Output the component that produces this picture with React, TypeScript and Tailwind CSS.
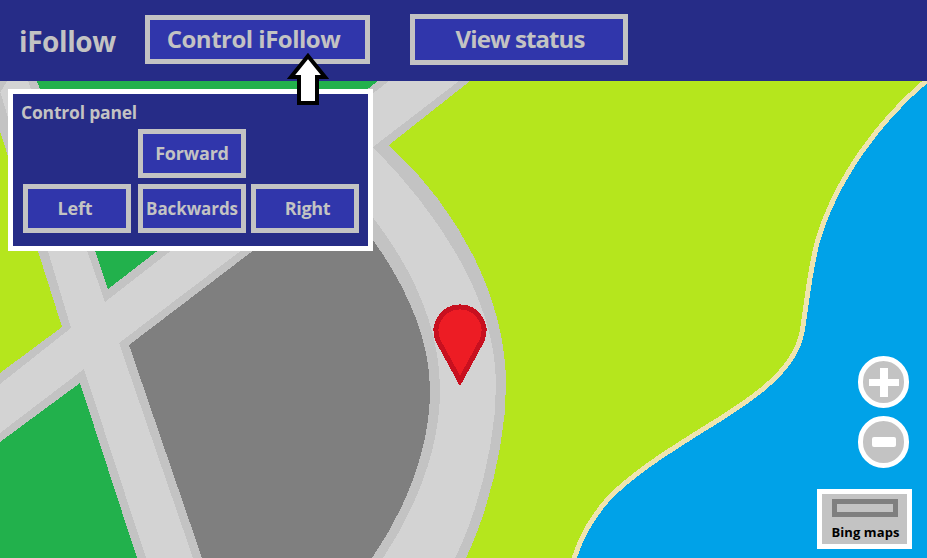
import type { ReactNode } from "react";

function Button({ className, children }: { className: string; children: ReactNode }) {
  return (
    <div
      className={`flex items-center justify-center border-[5px] border-[#c3c3c3] bg-[#3036ab] font-bold text-[#c3c3c3] ${className}`}
    >
      {children}
    </div>
  );
}

function MapArt() {
  return (
    <svg className="absolute inset-0 h-full w-full" viewBox="0 81 927 477" shapeRendering="crispEdges">
      <rect x="0" y="81" width="927" height="477" fill="#d3d3d3" />

      {/* left lime wedge */}
      <polygon points="0,91 71,328 0,384" fill="#c3c3c3" />
      <polygon points="0,131 62,327 0,373" fill="#b5e61d" />
      <polygon points="0,81 7,81 0,93" fill="#c3c3c3" />

      {/* green blocks */}
      <polygon points="28,81 105,302 389,81" fill="#c3c3c3" />
      <polygon points="37,81 108,289 378,81" fill="#22b14c" />
      <polygon points="84,369 146,558 0,558 0,433" fill="#c3c3c3" />
      <polygon points="80,383 137,558 0,558 0,442" fill="#22b14c" />

      {/* parking lot */}
      <path d="M119 343 L300 206 L350 190 C395 240 440 310 440 390 C440 450 415 510 383 558 L193 558 Z" fill="#c3c3c3" />
      <path d="M129 345 L300 215 L345 205 C385 250 430 320 430 390 C430 450 405 510 372 558 L202 558 Z" fill="#7f7f7f" />

      {/* big lime field */}
      <path d="M373 147 L459 81 L927 81 L927 558 L455 558 C479 510 496 440 496 385 C496 300 440 215 373 147 Z" fill="#c3c3c3" />
      <path d="M389 145 L470 81 L927 81 L927 558 L466 558 C489 510 506 440 506 385 C506 305 465 215 389 145 Z" fill="#b5e61d" />

      {/* water */}
      <path
        d="M932 76 C880 118 835 180 817 243 C808 280 806 310 802 332 C795 372 748 402 707 427 C670 450 625 478 603 505 C590 522 580 538 573 562 L932 562 Z"
        fill="#00a2e8"
        stroke="#efe4b0"
        strokeWidth="5"
      />

      {/* pin */}
      <path
        d="M460 381 L438 340.5 A24 24 0 1 1 482 340.5 Z"
        fill="#ed1c24"
        stroke="#c8101f"
        strokeWidth="5"
      />
    </svg>
  );
}

export default function App() {
  return (
    <div className="relative flex h-[558px] w-[927px] flex-col overflow-hidden font-['Open_Sans',sans-serif]">
      <header className="z-10 flex h-[81px] shrink-0 items-center bg-[#262c87] pl-[19px]">
        <div className="w-[126px] text-[28px] font-bold tracking-[-0.4px] text-[#c3c3c3]">iFollow</div>
        <Button className="mb-[2px] h-[49px] w-[225px] pb-[2px] pr-2 text-2xl tracking-[-0.5px]">Control iFollow</Button>
        <Button className="mb-[2px] ml-10 h-[51px] w-[218px] pb-[2px] pl-[2px] text-2xl tracking-[-0.9px]">View status</Button>
      </header>

      <main className="relative flex-1">
        <MapArt />

        {/* control panel */}
        <section className="absolute left-2 top-2 flex h-[162px] w-[365px] flex-col border-[5px] border-white bg-[#262c87] pl-[10px] pt-[5px] text-[#c3c3c3]">
          <div className="-ml-[2px] h-[30px] text-[17.5px] font-bold leading-[27px] tracking-[-0.2px]">Control panel</div>
          <div className="flex pl-[115px]">
            <Button className="h-[49px] w-[108px] pb-[2px] text-lg tracking-[-0.2px]">Forward</Button>
          </div>
          <div className="mt-[6px] flex">
            <Button className="h-[49px] w-[108px] pb-[2px] pr-1 text-lg tracking-[-0.2px]">Left</Button>
            <Button className="ml-[7px] h-[49px] w-[108px] text-[17px] tracking-[-0.1px]">Backwards</Button>
            <Button className="ml-[5px] h-[49px] w-[108px] pb-[2px] pl-[5px] text-lg tracking-[-0.3px]">Right</Button>
          </div>
        </section>

        {/* arrow pointing at the control button */}
        <svg className="absolute left-[280px] top-[-36px] z-20 h-[65px] w-[60px]" viewBox="280 45 60 65">
          <polygon points="308,56 325,77 317,77 317,103 299,103 299,77 291,77" fill="#fff" stroke="#000" strokeWidth="4" />
        </svg>

        {/* zoom controls */}
        <div className="absolute right-[18px] top-[275px] flex flex-col gap-2">
          <div className="flex h-[52px] w-[51px] items-center justify-center rounded-full border-[5px] border-white bg-[#c3c3c3]">
            <svg width="32" height="32" viewBox="0 0 32 32">
              <path d="M1 13 H12 V2 H20 V13 H31 V20 H20 V31 H12 V20 H1 Z" fill="#fff" />
            </svg>
          </div>
          <div className="flex h-[52px] w-[51px] items-center justify-center rounded-full border-[5px] border-white bg-[#c3c3c3]">
            <div className="h-[10px] w-6 rounded-[2px] bg-white" />
          </div>
        </div>

        {/* map style switcher */}
        <div className="absolute bottom-[9px] right-[15px] flex h-[60px] w-[95px] flex-col items-center border-[5px] border-white bg-[#c3c3c3]">
          <div className="mt-[5px] h-[18px] w-[66px] border-[5px] border-[#7f7f7f]" />
          <div className="ml-[2px] mt-[6px] text-[13px] font-bold leading-[18px] tracking-[0.1px] text-black">Bing maps</div>
        </div>
      </main>
    </div>
  );
}
